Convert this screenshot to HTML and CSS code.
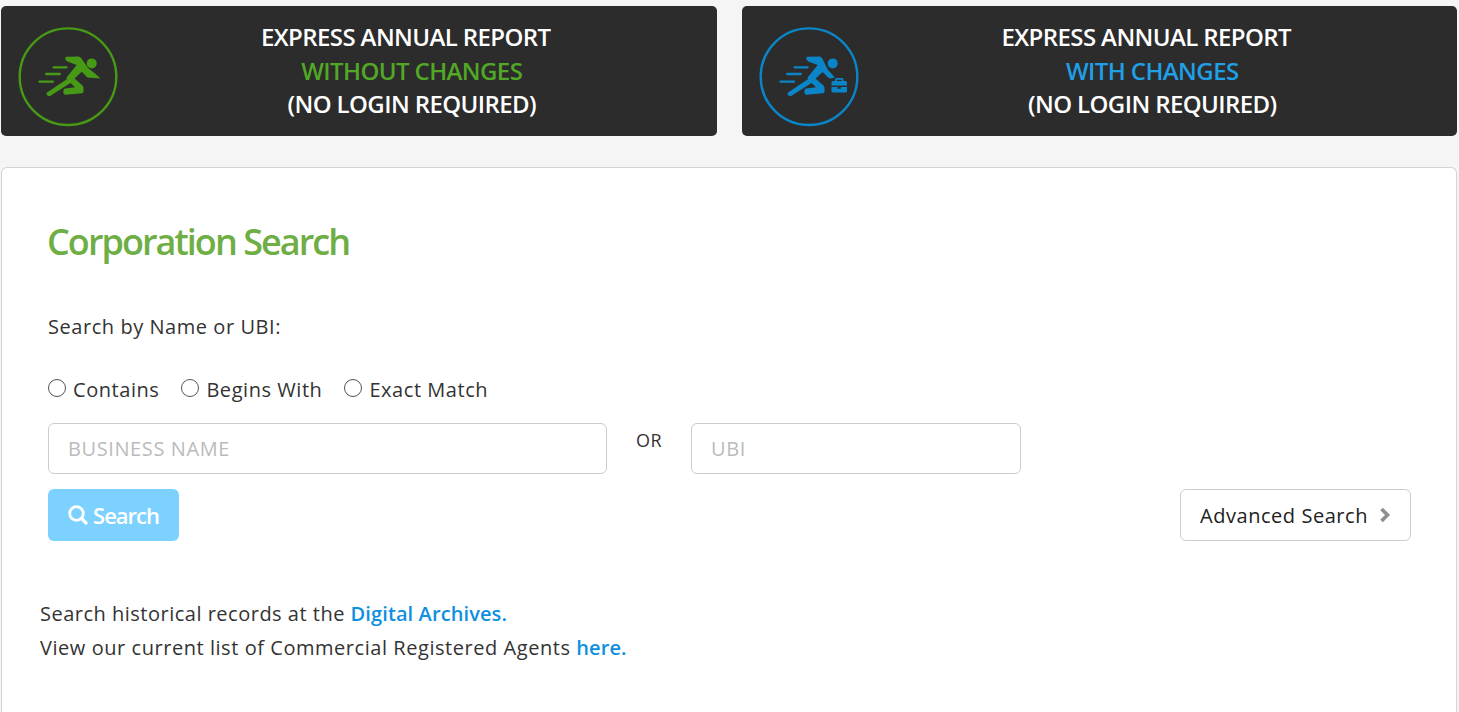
FILE: index.html
```html
<!DOCTYPE html>
<html lang="en">
<head>
<meta charset="utf-8">
<title>Corporation Search</title>
<link rel="stylesheet" href="styles.css">
</head>
<body>
<div class="banners">
  <a class="banner">
    <svg class="banner-icon" viewBox="0 0 100 100">
      <circle cx="50" cy="49.700" r="48.300" fill="none" stroke="#479a16" stroke-width="2.400"/>
      <g fill="#479a16">
        <circle cx="73.700" cy="36.400" r="5"/>
        <path d="M48.500 29.800L60.500 29.500Q62 29.500 63 31L70.500 41.500 77 46.500 82.500 51.500 69.500 50.500 63.700 44.700 56.500 51.500 64.500 58.500Q65.500 59.500 65.500 61V64.700Q65.500 66 64 66.200L47.500 67.800C45 68 44.500 62 47 61.500L57 60.300 49 52.500Q48 51.300 49 50L58.700 38 50 34.700C47 34 46.500 30 48.500 29.800Z"/>
        <path d="M50.300 51.300L53.700 55.300 32.500 68.700C30 70 27.500 67.500 29 65.500Z"/>
      </g>
      <path class="speed-green" d="M35.500 40.300H48.500M28.200 47H41.800M21.500 54.700H35"/>
    </svg>
    <div class="banner-text">
      <div class="line-first">EXPRESS ANNUAL REPORT</div>
      <div class="green">WITHOUT CHANGES</div>
      <div>(NO LOGIN REQUIRED)</div>
    </div>
  </a>
  <a class="banner">
    <svg class="banner-icon" viewBox="0 0 100 100">
      <circle cx="50" cy="49.700" r="48.300" fill="none" stroke="#0a86c8" stroke-width="2.400"/>
      <g fill="#0a86c8">
        <circle cx="73.700" cy="36.400" r="5"/>
        <path d="M48.500 29.800L60.500 29.500Q62 29.500 63 31L69 43 76 50.500 71 51.500 69 50.500 63.700 45 56.500 51.500 64.500 58.500Q65.500 59.500 65.500 61V64.700Q65.500 66 64 66.200L47.500 67.800C45 68 44.500 62 47 61.500L57 60.300 49 52.500Q48 51.300 49 50L58.700 38 50 34.700C47 34 46.500 30 48.500 29.800Z"/>
        <path d="M50.300 51.300L53.700 55.300 32.500 68.700C30 70 27.500 67.500 29 65.500Z"/>
        <path fill-rule="evenodd" d="M76 54V52.500Q76 51 77.500 51H83Q84.500 51 84.500 52.500V54H86.500Q88 54 88 55.500V58.600H72.500V55.500Q72.500 54 74 54ZM77.700 54H82.800V52.700H77.700ZM72.500 60H78.700V61.800H81.800V60H88V64Q88 65.500 86.500 65.500H74Q72.500 65.500 72.500 64Z"/>
      </g>
      <path class="speed-blue" d="M35.500 40.300H48.500M28.200 47H41.800M21.500 54.700H35"/>
    </svg>
    <div class="banner-text">
      <div class="line-first">EXPRESS ANNUAL REPORT</div>
      <div class="blue">WITH CHANGES</div>
      <div>(NO LOGIN REQUIRED)</div>
    </div>
  </a>
</div>
<main class="panel">
  <h1 class="title">Corporation Search</h1>
  <p class="prompt">Search by Name or UBI:</p>
  <div class="radios">
    <label class="radio"><input type="radio" name="mode"><span>Contains</span></label>
    <label class="radio"><input type="radio" name="mode"><span>Begins With</span></label>
    <label class="radio"><input type="radio" name="mode"><span>Exact Match</span></label>
  </div>
  <div class="fields">
    <input class="field field-name" type="text" placeholder="BUSINESS NAME">
    <span class="or">OR</span>
    <input class="field field-ubi" type="text" placeholder="UBI">
  </div>
  <div class="actions">
    <button class="btn-search" type="button">
      <svg class="search-icon" viewBox="0 0 20 20"><circle cx="8.500" cy="8.500" r="6.800" fill="none" stroke="#fff" stroke-width="2.800"/><path d="M13.500 13.500L18 18" stroke="#fff" stroke-width="3.200" stroke-linecap="round"/></svg>
      <span>Search</span>
    </button>
    <button class="btn-advanced" type="button">
      <span>Advanced Search</span>
      <svg class="chev" viewBox="0 0 12 16"><path d="M2.500 2L8.500 8 2.500 14" fill="none" stroke="#8f8f8f" stroke-width="3.600"/></svg>
    </button>
  </div>
  <div class="links">
    <div class="line-tight">Search historical records at the <a class="link">Digital Archives.</a></div>
    <div>View our current list of Commercial Registered Agents <a class="link">here.</a></div>
  </div>
</main>
</body>
</html>
```
FILE: styles.css
```css
* { box-sizing: border-box; }
html, body { height: 100%; }
body {
  margin: 0;
  background: #f5f5f5;
  font-family: "Open Sans", sans-serif;
  color: #333;
  font-size: 20px;
  letter-spacing: 0.55px;
  overflow: hidden;
}
.banners {
  display: flex;
  gap: 25px;
  padding: 6px 2px 0 1px;
}
.banner {
  flex: 1;
  height: 130px;
  background: #2c2c2c;
  border-radius: 5px;
  display: flex;
  align-items: flex-start;
  padding: 21px 0 0 17px;
}
.banner-icon { width: 100px; height: 100px; flex: none; }
.banner-text {
  flex: 1;
  text-align: center;
  color: #fff;
  font-size: 24px;
  font-weight: 600;
  letter-spacing: -0.6px;
  line-height: 33.500px;
  padding: 0 11px 0 0;
  margin-top: -7px;
}
.line-first { padding-right: 12px; }
.green { color: #52a826; }
.blue { color: #1f9fe6; }
.panel {
  margin: 31px 2px 0 1px;
  height: 560px;
  background: #fff;
  border: 1px solid #d4d4d4;
  border-bottom: 0;
  border-radius: 6px 6px 0 0;
  padding: 49px 45px 0 46px;
}
.title {
  margin: 0 0 0 -1px;
  font-size: 36px;
  line-height: 50px;
  font-weight: 600;
  color: #6fae45;
  letter-spacing: -1.950px;
}
.prompt { margin: 45px 0 0; line-height: 30px; }
.radios { display: flex; gap: 22px; margin-top: 33px; line-height: 30px; }
.radio { display: flex; align-items: flex-start; }
.radio input {
  appearance: none;
  width: 18px;
  height: 18px;
  margin: 4px 7px 0 0;
  border: 1.500px solid #555;
  border-radius: 50%;
  background: #fff;
}
.fields { display: flex; align-items: flex-start; margin-top: 18px; }
.field {
  height: 51px;
  border: 1px solid #ccc;
  border-radius: 6px;
  background: #fff;
  font: 20px "Open Sans", sans-serif;
  letter-spacing: 0.6px;
  padding: 0 19px;
  color: #333;
}
.field::placeholder { color: #bbb; opacity: 1; }
.field-name { width: 559px; }
.field-ubi { width: 330px; }
.or { width: 84px; text-align: center; line-height: 34px; font-size: 18px; }
.actions { display: flex; justify-content: space-between; margin-top: 15px; }
.btn-search {
  width: 131px;
  height: 52px;
  background: #7dd1ff;
  border: 0;
  border-radius: 6px;
  color: #fff;
  font: 600 22px "Open Sans", sans-serif;
  letter-spacing: -1px;
  display: flex;
  align-items: center;
  justify-content: center;
  gap: 5px;
}
.search-icon { width: 20px; height: 20px; }
.btn-advanced {
  width: 231px;
  height: 52px;
  background: #fff;
  border: 1px solid #ccc;
  border-radius: 6px;
  color: #222;
  font: 20px "Open Sans", sans-serif;
  letter-spacing: 0.55px;
  display: flex;
  align-items: center;
  justify-content: center;
  gap: 11px;
}
.chev { width: 12px; height: 16px; }
.links { margin: 56px 0 0 -8px; line-height: 34px; }
.line-tight { letter-spacing: 0.5px; }
.link { color: #0f8fe0; font-weight: 600; letter-spacing: 0.1px; }
.speed-green, .speed-blue { fill: none; stroke-width: 2.300; stroke-linecap: round; }
.speed-green { stroke: #479a16; }
.speed-blue { stroke: #0a86c8; }
```
